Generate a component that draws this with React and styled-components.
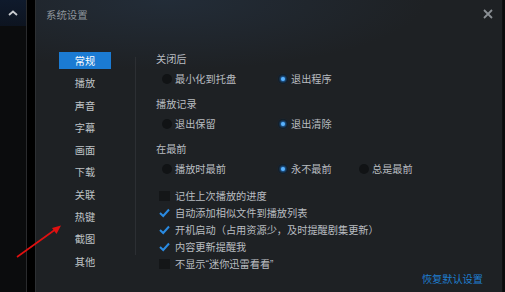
import styled, { createGlobalStyle } from "styled-components";

const GlobalStyle = createGlobalStyle`
    html, body {
        margin: 0;
        padding: 0;
        background: #0a0b0c;
    }
    body {
        font-family: "Liberation Sans", "Noto Sans CJK SC", sans-serif;
    }
`;

const Page = styled.div`
    position: relative;
    width: 505px;
    height: 292px;
    display: flex;
    overflow: hidden;
    background: #0a0b0c;
    padding-right: 2px;
    box-sizing: border-box;
`;

const Strip = styled.div`
    width: 26px;
    flex-shrink: 0;
    display: flex;
    flex-direction: column;
    background: #0b0c0d;
    border-right: 1px solid #2a2b2d;
`;

const StripTop = styled.div`
    height: 26px;
    display: flex;
    align-items: center;
    justify-content: center;
    background: linear-gradient(180deg, #0f1a2c 0%, #0d1420 100%);
`;

const Gap = styled.div`
    width: 8px;
    flex-shrink: 0;
    background: #000;
`;

const Dialog = styled.div`
    flex: 1;
    display: flex;
    flex-direction: column;
    border-left: 1px solid #2d3033;
    border-right: 1px solid #0e0f10;
    background:
        radial-gradient(ellipse 260px 70px at 130px 0px, rgba(40, 58, 80, 0.45), rgba(0, 0, 0, 0)),
        #1e2124;
    color: #b9bdc1;
    font-size: 10.2px;
`;

const Header = styled.div`
    height: 28px;
    display: flex;
    align-items: center;
    justify-content: space-between;
    padding: 0 9px 0 10px;
`;

const Title = styled.span`
    color: #8e959c;
    font-size: 10.4px;
`;

const Body = styled.div`
    flex: 1;
    display: flex;
    padding-top: 24px;
`;

const Sidebar = styled.div`
    width: 99px;
    flex-shrink: 0;
    display: flex;
    flex-direction: column;
    padding-left: 23px;
    box-sizing: border-box;
`;

const MenuItem = styled.div`
    width: 52px;
    height: 17px;
    margin-bottom: 5.3px;
    display: flex;
    align-items: center;
    justify-content: center;
    color: ${(props) => props.active ? "#ffffff" : "#bfc3c6"};
    background: ${(props) => props.active ? "#1b7bd3" : "transparent"};
`;

const Divider = styled.div`
    width: 1px;
    height: 198px;
    margin-top: 5px;
    background: #2c2f33;
    flex-shrink: 0;
`;

const Content = styled.div`
    flex: 1;
    display: flex;
    flex-direction: column;
    padding: 0 19px 0 20px;
`;

const Group = styled.div`
    display: flex;
    flex-direction: column;
    margin-bottom: 9.5px;
`;

const Heading = styled.div`
    height: 16px;
    line-height: 16px;
    margin-bottom: 1.5px;
`;

const OptionRow = styled.div`
    height: 18px;
    display: flex;
    align-items: center;
    padding-left: 6px;
`;

const Option = styled.label`
    display: flex;
    align-items: center;
    gap: 3px;
    width: ${(props) => props.w ? `${props.w}px` : "auto"};
    flex-shrink: 0;
`;

const RadioDot = styled.span`
    width: 10px;
    height: 10px;
    border-radius: 50%;
    background: #111315;
    display: flex;
    align-items: center;
    justify-content: center;

    &::after {
        content: "";
        width: 4px;
        height: 4px;
        border-radius: 50%;
        background: ${(props) => props.on ? "#5cb4ff" : "transparent"};
        box-shadow: ${(props) => props.on ? "0 0 3px 1px rgba(40, 140, 240, 0.9)" : "none"};
    }
`;

const CheckList = styled.div`
    display: flex;
    flex-direction: column;
`;

const CheckRow = styled.label`
    height: 17px;
    display: flex;
    align-items: center;
    gap: 5px;
    padding-left: 3px;
`;

const CheckBox = styled.span`
    width: 11px;
    height: 10px;
    display: flex;
    align-items: center;
    justify-content: center;
    background: ${(props) => props.on ? "transparent" : "#141618"};
`;

const Footer = styled.div`
    display: flex;
    justify-content: flex-end;
    height: 14px;
    line-height: 14px;
    margin-top: 1px;
`;

const RestoreLink = styled.span`
    color: #1f7fd0;
`;

const Arrow = styled.svg`
    position: absolute;
    left: 0;
    top: 0;
    pointer-events: none;
`;

const menu = ["常规", "播放", "声音", "字幕", "画面", "下载", "关联", "热键", "截图", "其他"];

const groups = [
    { title: "关闭后", options: [{ label: "最小化到托盘", w: 116 }, { label: "退出程序", on: true }] },
    { title: "播放记录", options: [{ label: "退出保留", w: 116 }, { label: "退出清除", on: true }] },
    { title: "在最前", options: [{ label: "播放时最前", w: 116 }, { label: "永不最前", on: true, w: 81 }, { label: "总是最前" }] },
];

const checks = [
    { label: "记住上次播放的进度" },
    { label: "自动添加相似文件到播放列表", on: true },
    { label: "开机启动（占用资源少，及时提醒剧集更新）", on: true },
    { label: "内容更新提醒我", on: true },
    { label: "不显示“迷你迅雷看看”" },
];

const App = () => {
    return (
        <Page>
            <GlobalStyle />
            <Strip>
                <StripTop>
                    <svg width="10" height="6" viewBox="0 0 10 6">
                        <path d="M1 5 L5 1.5 L9 5" stroke="#c9ccd0" strokeWidth="1.8" fill="none" />
                    </svg>
                </StripTop>
            </Strip>
            <Gap />
            <Dialog>
                <Header>
                    <Title>系统设置</Title>
                    <svg width="10" height="10" viewBox="0 0 10 10">
                        <path d="M1 1 L9 9 M9 1 L1 9" stroke="#8a8f94" strokeWidth="1.8" />
                    </svg>
                </Header>
                <Body>
                    <Sidebar>
                        {menu.map((m, idx) => (
                            <MenuItem key={m} active={idx === 0}>{m}</MenuItem>
                        ))}
                    </Sidebar>
                    <Divider />
                    <Content>
                        {groups.map((g) => (
                            <Group key={g.title}>
                                <Heading>{g.title}</Heading>
                                <OptionRow>
                                    {g.options.map((o) => (
                                        <Option key={o.label} w={o.w}>
                                            <RadioDot on={o.on} />
                                            {o.label}
                                        </Option>
                                    ))}
                                </OptionRow>
                            </Group>
                        ))}
                        <CheckList>
                            {checks.map((c) => (
                                <CheckRow key={c.label}>
                                    <CheckBox on={c.on}>
                                        {c.on && (
                                            <svg width="11" height="10" viewBox="0 0 11 10">
                                                <path d="M1 5 L4.2 8 L10 1.5" stroke="#2a8be2" strokeWidth="2" fill="none" />
                                            </svg>
                                        )}
                                    </CheckBox>
                                    {c.label}
                                </CheckRow>
                            ))}
                        </CheckList>
                        <Footer>
                            <RestoreLink>恢复默认设置</RestoreLink>
                        </Footer>
                    </Content>
                </Body>
            </Dialog>
            <Arrow width="505" height="292" viewBox="0 0 505 292">
                <path d="M17 257 L56 229" stroke="#e01010" strokeWidth="1.6" />
                <path d="M61 225.5 L52 228 L56.5 234 Z" fill="#e01010" />
            </Arrow>
        </Page>
    );
};

export default App;
